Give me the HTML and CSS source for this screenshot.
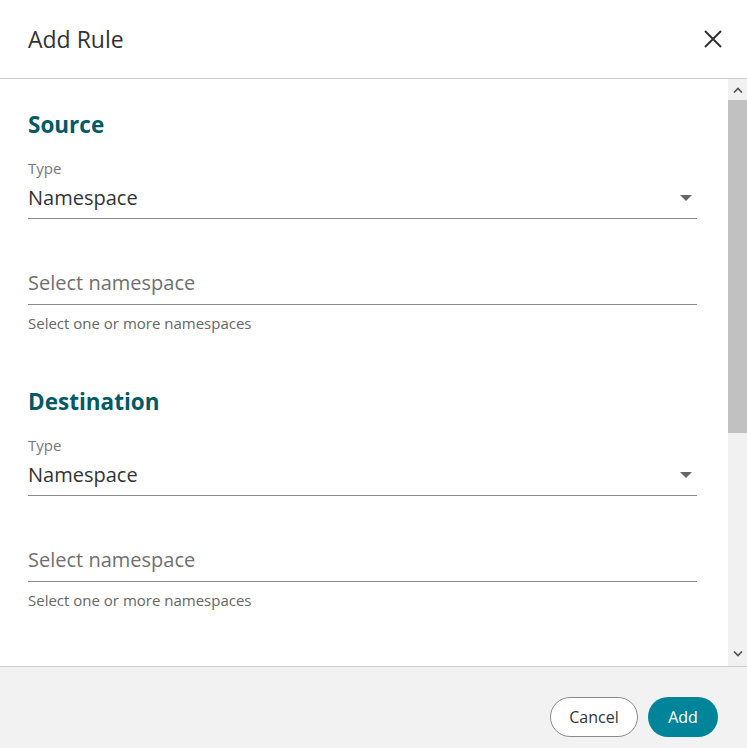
FILE: index.html
```html
<!DOCTYPE html>
<html lang="en">
<head>
<meta charset="utf-8">
<title>Add Rule</title>
<link rel="stylesheet" href="styles.css">
</head>
<body>
<div class="dialog">
  <header class="dialog-header">
    <h1 class="dialog-title">Add Rule</h1>
    <button class="close-btn" aria-label="Close">
      <svg width="18" height="18" viewBox="0 0 18 18"><path d="M1 1L17 17M17 1L1 17" stroke="#333" stroke-width="2" fill="none"/></svg>
    </button>
  </header>
  <div class="dialog-body">
    <div class="content">
      <section class="section">
        <h2 class="section-title">Source</h2>
        <div class="select-field">
          <div class="field-label">Type</div>
          <div class="field-control">
            <span class="field-value">Namespace</span>
            <span class="caret"></span>
          </div>
        </div>
        <div class="input-field">
          <div class="field-control">
            <span class="placeholder">Select namespace</span>
          </div>
          <div class="helper">Select one or more namespaces</div>
        </div>
      </section>
      <section class="section">
        <h2 class="section-title">Destination</h2>
        <div class="select-field">
          <div class="field-label">Type</div>
          <div class="field-control">
            <span class="field-value">Namespace</span>
            <span class="caret"></span>
          </div>
        </div>
        <div class="input-field">
          <div class="field-control">
            <span class="placeholder">Select namespace</span>
          </div>
          <div class="helper">Select one or more namespaces</div>
        </div>
      </section>
    </div>
    <div class="scrollbar">
      <div class="sb-btn">
        <svg width="10" height="6" viewBox="0 0 10 6"><path d="M1 5.5L5 1.5L9 5.5" stroke="#505050" stroke-width="1.6" fill="none"/></svg>
      </div>
      <div class="sb-track">
        <div class="sb-thumb"></div>
      </div>
      <div class="sb-btn sb-btn-down">
        <svg width="10" height="6" viewBox="0 0 10 6"><path d="M1 0.5L5 4.5L9 0.5" stroke="#505050" stroke-width="1.6" fill="none"/></svg>
      </div>
    </div>
  </div>
  <footer class="dialog-footer">
    <button class="btn btn-secondary">Cancel</button>
    <button class="btn btn-primary">Add</button>
  </footer>
</div>
</body>
</html>
```
FILE: styles.css
```css
* { box-sizing: border-box; }
html, body {
  margin: 0;
  padding: 0;
  background: #fff;
  font-family: "Open Sans", "Liberation Sans", sans-serif;
}
.dialog {
  width: 747px;
  height: 748px;
  display: flex;
  flex-direction: column;
  background: #fff;
}
.dialog-header {
  height: 79px;
  flex: none;
  display: flex;
  align-items: center;
  justify-content: space-between;
  padding: 0 24px 1px 28px;
  border-bottom: 1px solid #cccccc;
}
.dialog-title {
  margin: 0;
  font-size: 23px;
  line-height: 30px;
  font-weight: 400;
  color: #333;
}
.close-btn {
  border: 0;
  background: none;
  padding: 0;
  width: 20px;
  height: 20px;
  display: flex;
  align-items: center;
  justify-content: center;
  cursor: pointer;
}
.dialog-body {
  flex: 1;
  display: flex;
  min-height: 0;
}
.content {
  flex: 1;
  padding: 31px 31px 0 28px;
  overflow: hidden;
}
.section-title {
  margin: 0;
  font-size: 22.5px;
  line-height: 30px;
  font-weight: 700;
  color: #005a66;
}
.select-field {
  margin-top: 18px;
}
.field-label {
  font-size: 15px;
  line-height: 20px;
  color: #777;
}
.field-control {
  display: flex;
  align-items: center;
  justify-content: space-between;
  border-bottom: 1px solid #8a8a8a;
  padding-bottom: 8px;
}
.select-field .field-control {
  margin-top: 8px;
}
.field-value {
  font-size: 20px;
  line-height: 24px;
  color: #333;
}
.caret {
  width: 0;
  height: 0;
  border-left: 6px solid transparent;
  border-right: 6px solid transparent;
  border-top: 6px solid #666;
  margin-right: 5px;
}
.input-field {
  margin-top: 52px;
}
.input-field .field-control {
  padding-bottom: 9px;
}
.placeholder {
  font-size: 20px;
  line-height: 24px;
  color: #707070;
}
.helper {
  margin-top: 8px;
  font-size: 15px;
  line-height: 20px;
  color: #666;
}
.section + .section {
  margin-top: 54px;
}
.scrollbar {
  width: 19px;
  flex: none;
  display: flex;
  flex-direction: column;
  background: #f1f1f1;
}
.sb-btn {
  height: 21px;
  flex: none;
  display: flex;
  align-items: center;
  justify-content: center;
}
.sb-btn-down {
  height: 24px;
}
.sb-track {
  flex: 1;
}
.sb-thumb {
  height: 333px;
  background: #c1c1c1;
}
.dialog-footer {
  height: 82px;
  flex: none;
  background: #f2f2f2;
  border-top: 1px solid #cccccc;
  display: flex;
  align-items: center;
  justify-content: flex-end;
  gap: 10px;
  padding: 18px 29px 0 0;
}
.btn {
  height: 40px;
  border-radius: 20px;
  font-family: "Open Sans", "Liberation Sans", sans-serif;
  font-size: 16px;
  cursor: pointer;
}
.btn-secondary {
  width: 88px;
  background: #fff;
  border: 1px solid #8a8a8a;
  color: #333;
}
.btn-primary {
  width: 70px;
  background: #00849a;
  border: 0;
  color: #fff;
}
```
